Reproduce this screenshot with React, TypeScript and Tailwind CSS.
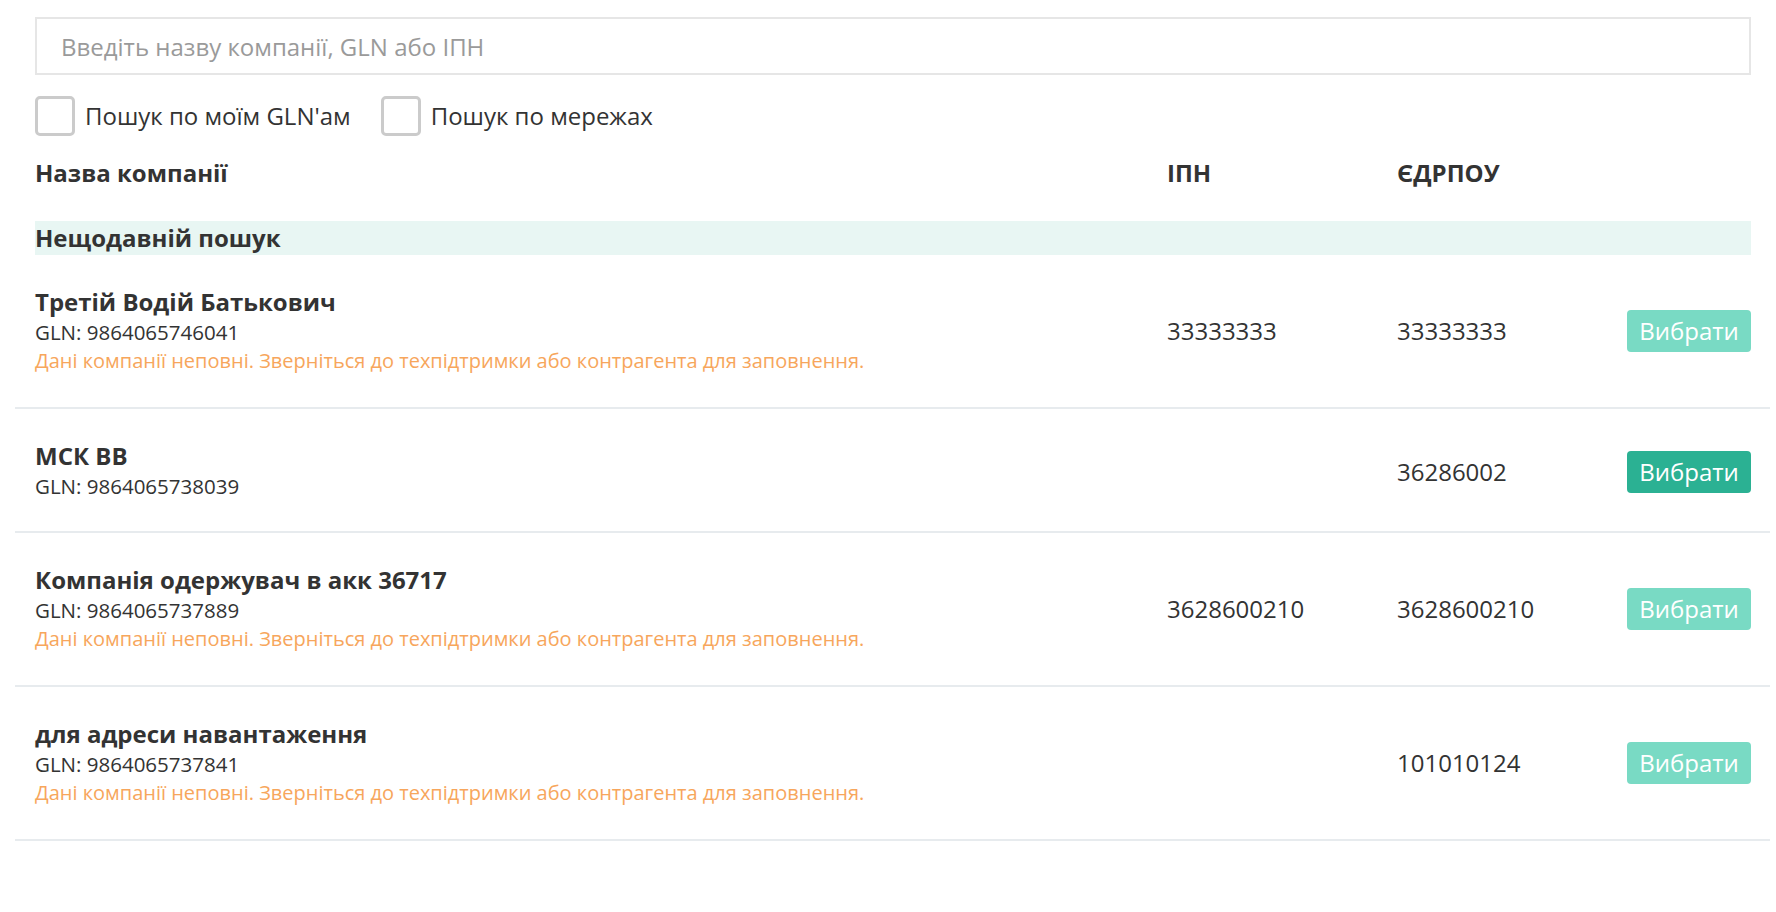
import { useState } from 'react';

interface Company {
  name: string;
  gln: string;
  ipn?: string;
  edrpou: string;
  incomplete: boolean;
}

const companies: Company[] = [
  { name: 'Третій Водій Батькович', gln: '9864065746041', ipn: '33333333', edrpou: '33333333', incomplete: true },
  { name: 'МСК ВВ', gln: '9864065738039', edrpou: '36286002', incomplete: false },
  { name: 'Компанія одержувач в акк 36717', gln: '9864065737889', ipn: '3628600210', edrpou: '3628600210', incomplete: true },
  { name: 'для адреси навантаження', gln: '9864065737841', edrpou: '101010124', incomplete: true },
];

function Checkbox({ label }: { label: string }) {
  const [checked, setChecked] = useState(false);
  return (
    <label className="flex items-center cursor-pointer select-none">
      <span
        onClick={() => setChecked(!checked)}
        className={`w-[40px] h-[40px] rounded-[5px] border-[3px] ${checked ? 'border-[#2bb193] bg-[#2bb193]' : 'border-[#cbcbcb] bg-white'}`}
      />
      <span className="ml-[10px] text-[24px] text-[#333]">{label}</span>
    </label>
  );
}

export default function App() {
  const [query, setQuery] = useState('');

  return (
    <div className="min-h-screen bg-white text-[#333]" style={{ fontFamily: '"Open Sans", "Noto Sans", sans-serif' }}>
      <div className="pl-[35px] pr-[25px] pt-[17px]">
        <input
          value={query}
          onChange={(e) => setQuery(e.target.value)}
          placeholder="Введіть назву компанії, GLN або ІПН"
          className="w-full h-[58px] border-2 border-[#e6e6e6] px-[24px] text-[24px] text-[#333] placeholder:text-[#9a9a9a] outline-none"
        />

        <div className="flex items-center gap-[30px] mt-[21px]">
          <Checkbox label="Пошук по моїм GLN'ам" />
          <Checkbox label="Пошук по мережах" />
        </div>

        {/* table header */}
        <div className="grid grid-cols-[1132px_230px_230px_1fr] mt-[21px] mb-[32px] text-[24px] font-bold leading-[32px]">
          <div>Назва компанії</div>
          <div>ІПН</div>
          <div>ЄДРПОУ</div>
          <div />
        </div>

        <div className="bg-[#e8f6f3] h-[34px] leading-[34px] text-[24px] font-bold">Нещодавній пошук</div>
      </div>

      <div className="ml-[15px] mr-[6px]">
        {companies.map((c) => (
          <div
            key={c.gln}
            className={`grid grid-cols-[1132px_230px_230px_1fr] items-center pl-[20px] pr-[19px] pt-[32px] border-b-2 border-[#e7ebee] ${c.incomplete ? 'pb-[33px]' : 'pb-[29px]'}`}
          >
            <div>
              <div className="text-[24px] font-bold leading-[30px]">{c.name}</div>
              <div className="text-[20.5px] leading-[31px]">GLN: {c.gln}</div>
              {c.incomplete && (
                <div className="text-[20px] leading-[26px] text-[#f7a65c]">
                  Дані компанії неповні. Зверніться до техпідтримки або контрагента для заповнення.
                </div>
              )}
            </div>
            <div className="text-[24px]">{c.ipn}</div>
            <div className="text-[24px]">{c.edrpou}</div>
            <button
              className={`h-[42px] rounded-[4px] text-white text-[24px] ${c.incomplete ? 'bg-[#79dac4]' : 'bg-[#2bb193]'}`}
            >
              Вибрати
            </button>
          </div>
        ))}
      </div>
    </div>
  );
}
